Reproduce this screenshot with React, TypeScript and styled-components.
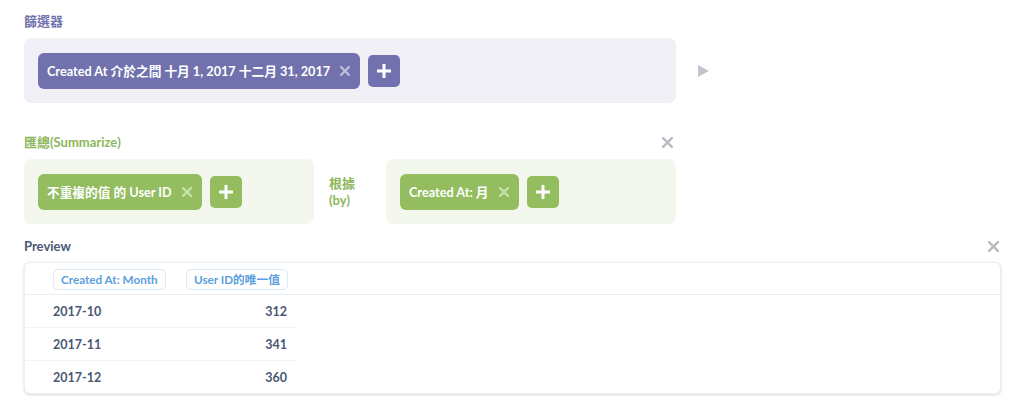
import React from "react";
import styled, { createGlobalStyle } from "styled-components";

const GlobalStyle = createGlobalStyle`
    body {
        margin: 0;
        background: #ffffff;
        font-family: Lato, "Noto Sans CJK TC", sans-serif;
        -webkit-font-smoothing: antialiased;
    }
`;

const Page = styled.div`
    width: 1024px;
    height: 406px;
    box-sizing: border-box;
    padding: 12px 23px 0 24px;
    overflow: hidden;
`;

const SectionTitle = styled.div<{ color: string }>`
    height: 18px;
    line-height: 18px;
    font-size: 13px;
    font-weight: 700;
    color: ${props => props.color};
`;

const HeadRow = styled.div<{ width: string }>`
    display: flex;
    justify-content: space-between;
    align-items: center;
    width: ${props => props.width};
`;

const FilterRow = styled.div`
    display: flex;
    align-items: center;
    margin-top: 8px;
`;

const StepBox = styled.div<{ bg: string; width: number }>`
    display: flex;
    align-items: center;
    gap: 8px;
    box-sizing: border-box;
    width: ${props => props.width}px;
    height: 65px;
    padding: 0 14px;
    background: ${props => props.bg};
    border-radius: 7px;
`;

const Pill = styled.div<{ bg: string }>`
    display: flex;
    align-items: center;
    gap: 10px;
    height: 36px;
    padding: 0 10px 0 9px;
    border-radius: 6px;
    background: ${props => props.bg};
    color: #ffffff;
    font-size: 12.7px;
    font-weight: 700;
    white-space: nowrap;
`;

const PlusButton = styled.div<{ bg: string }>`
    display: flex;
    align-items: center;
    justify-content: center;
    width: 32px;
    height: 32px;
    border-radius: 5px;
    background: ${props => props.bg};
`;

const RunArrow = styled.div`
    margin-left: 22px;
    width: 0;
    height: 0;
    border-top: 6px solid transparent;
    border-bottom: 6px solid transparent;
    border-left: 11px solid #c4c5cc;
`;

const SummarySection = styled.div`
    margin-top: 30px;
`;

const SummaryRow = styled.div`
    display: flex;
    align-items: center;
    margin-top: 8px;
`;

const ByLabel = styled.div`
    width: 72px;
    box-sizing: border-box;
    padding-left: 15px;
    font-size: 13px;
    font-weight: 700;
    line-height: 17px;
    color: #8db75c;
`;

const PreviewSection = styled.div`
    margin-top: 13px;
`;

const Card = styled.div`
    margin-top: 7px;
    width: 977px;
    height: 132px;
    box-sizing: border-box;
    border: 1px solid #eceef1;
    border-radius: 6px;
    box-shadow: 0 1px 3px rgba(0, 0, 0, 0.16);
    background: #ffffff;
`;

const TableHead = styled.div`
    display: flex;
    align-items: center;
    height: 31px;
    padding-left: 28px;
    border-bottom: 1px solid #ebedf0;
`;

const HeadCell = styled.div<{ width: number }>`
    width: ${props => props.width}px;
`;

const HeadTag = styled.span`
    display: inline-block;
    height: 21px;
    line-height: 19px;
    box-sizing: border-box;
    padding: 0 7px;
    border: 1px solid #d9e9f8;
    border-radius: 5px;
    color: #5ba0e0;
    font-size: 11.7px;
    font-weight: 700;
`;

const Row = styled.div<{ last?: boolean }>`
    display: flex;
    align-items: center;
    width: 271px;
    height: 33px;
    padding-left: 28px;
    box-sizing: border-box;
    border-bottom: ${props => (props.last ? "none" : "1px solid #f2f3f5")};
    font-size: 12.5px;
    font-weight: 700;
    color: #4c5773;
`;

const Cell = styled.div<{ width: number; right?: boolean }>`
    width: ${props => props.width}px;
    text-align: ${props => (props.right ? "right" : "left")};
`;

const CloseIcon = ({ color, size = 10 }: { color: string; size?: number }) => (
    <svg width={size} height={size} viewBox="0 0 10 10">
        <path d="M1 1 L9 9 M9 1 L1 9" stroke={color} strokeWidth="2.2" strokeLinecap="square" />
    </svg>
);

const PlusIcon = () => (
    <svg width="14" height="14" viewBox="0 0 14 14">
        <path d="M7 0 V14 M0 7 H14" stroke="#ffffff" strokeWidth="3" />
    </svg>
);

const PURPLE = "#7172ad";
const GREEN = "#93bd5f";

const rows = [
    { month: "2017-10", count: 312 },
    { month: "2017-11", count: 341 },
    { month: "2017-12", count: 360 },
];

export default function App() {
    return (
        <Page>
            <GlobalStyle />
            <SectionTitle color={PURPLE}>篩選器</SectionTitle>
            <FilterRow>
                <StepBox bg="#f0f0f6" width={652}>
                    <Pill bg={PURPLE}>
                        Created At 介於之間 十月 1, 2017 十二月 31, 2017
                        <CloseIcon color="rgba(255,255,255,0.55)" />
                    </Pill>
                    <PlusButton bg={PURPLE}>
                        <PlusIcon />
                    </PlusButton>
                </StepBox>
                <RunArrow />
            </FilterRow>

            <SummarySection>
                <HeadRow width="649px">
                    <SectionTitle color="#8db75c">匯總(Summarize)</SectionTitle>
                    <CloseIcon color="#b9bcc4" size={11} />
                </HeadRow>
                <SummaryRow>
                    <StepBox bg="#f3f7ed" width={290}>
                        <Pill bg={GREEN}>
                            不重複的值 的 User ID
                            <CloseIcon color="rgba(255,255,255,0.55)" />
                        </Pill>
                        <PlusButton bg={GREEN}>
                            <PlusIcon />
                        </PlusButton>
                    </StepBox>
                    <ByLabel>
                        根據
                        <br />
                        (by)
                    </ByLabel>
                    <StepBox bg="#f3f7ed" width={290}>
                        <Pill bg={GREEN}>
                            Created At: 月
                            <CloseIcon color="rgba(255,255,255,0.55)" />
                        </Pill>
                        <PlusButton bg={GREEN}>
                            <PlusIcon />
                        </PlusButton>
                    </StepBox>
                </SummaryRow>
            </SummarySection>

            <PreviewSection>
                <HeadRow width="975px">
                    <SectionTitle color="#4c5773">Preview</SectionTitle>
                    <CloseIcon color="#b9bcc4" size={11} />
                </HeadRow>
                <Card>
                    <TableHead>
                        <HeadCell width={133}>
                            <HeadTag>Created At: Month</HeadTag>
                        </HeadCell>
                        <HeadCell width={110}>
                            <HeadTag>User ID的唯一值</HeadTag>
                        </HeadCell>
                    </TableHead>
                    {rows.map((r, i) => (
                        <Row key={r.month} last={i === rows.length - 1}>
                            <Cell width={133}>{r.month}</Cell>
                            <Cell width={101} right>
                                {r.count}
                            </Cell>
                        </Row>
                    ))}
                </Card>
            </PreviewSection>
        </Page>
    );
}
